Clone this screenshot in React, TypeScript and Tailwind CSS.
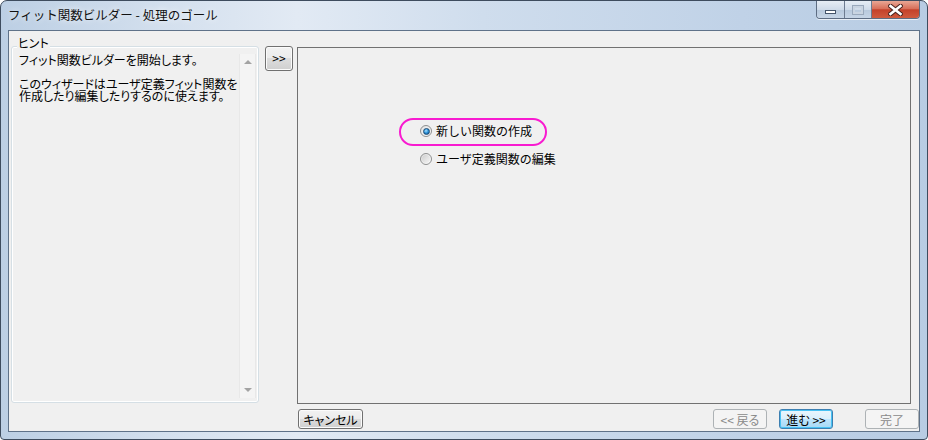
import React from 'react';

type BtnKind = 'normal' | 'disabled' | 'default';

const btnStyles: Record<BtnKind, string> = {
  normal:
    'border-[#707070] text-black bg-[linear-gradient(#f2f2f2_0%,#ebebeb_50%,#dddddd_50%,#cfcfcf_100%)] shadow-[inset_0_0_0_1px_#fbfbfb]',
  disabled: 'border-[#adb2b5] text-[#8a8a8a] bg-[#f4f4f4]',
  default:
    'border-[#3c7fb1] text-black bg-[linear-gradient(#eaf6fd_0%,#d9f0fc_50%,#bee6fd_50%,#a7d9f5_100%)] shadow-[inset_0_0_0_1px_#48c2f3]',
};

const Btn = ({ children, kind = 'normal', w }: { children: React.ReactNode; kind?: BtnKind; w: string }) => (
  <div
    className={`${w} h-[20px] shrink-0 border rounded-[3px] flex items-center justify-center text-[12px] leading-[13px] [font-feature-settings:'palt'] ${btnStyles[kind]}`}
  >
    {children}
  </div>
);

const Radio = ({ checked }: { checked?: boolean }) => (
  <span className="w-[12px] h-[12px] shrink-0 rounded-full border border-[#8e8f8f] bg-[linear-gradient(135deg,#e2e2e2,#fdfdfd)] flex items-center justify-center">
    {checked ? (
      <span className="w-[7px] h-[7px] rounded-full border border-[#1a4a74] bg-[radial-gradient(circle_at_40%_35%,#a8e2ff_0%,#2a90d8_50%,#0f4a80_100%)]" />
    ) : (
      <span className="w-[8px] h-[8px] rounded-full bg-[linear-gradient(135deg,#cfcfcf,#f5f5f5)]" />
    )}
  </span>
);

const CaptionButtons = () => (
  <div className="ml-auto mr-[7px] flex h-[18px] rounded-b-[4px] border border-t-0 border-[#5d6c82] overflow-hidden shadow-[0_1px_0_#e8eef6]">
    <div className="w-[28px] h-full border-r border-[#6d7b90] bg-[linear-gradient(#e6edf5_0%,#cfdbe9_50%,#b7c8dc_51%,#c6d5e6_100%)] flex items-end justify-center pb-[4px]">
      <span className="w-[11px] h-[4px] bg-white border border-[#44546a]" />
    </div>
    <div className="w-[27px] h-full border-r border-[#6d7b90] bg-[linear-gradient(#e6edf5_0%,#cfdbe9_50%,#b7c8dc_51%,#c6d5e6_100%)] flex items-center justify-center">
      <span className="w-[10px] h-[8px] border-2 border-[#c9d4e1] shadow-[0_0_0_1px_#9aa9bc]" />
    </div>
    <div className="w-[47px] h-full bg-[linear-gradient(#e9a795_0%,#d8705a_45%,#c4412a_52%,#cf5a3e_100%)] flex items-center justify-center">
      <svg width="15" height="12" viewBox="0 0 15 12">
        <path d="M2.5 2 L12.5 10 M12.5 2 L2.5 10" stroke="#4a2420" strokeWidth="4.6" strokeLinecap="square" />
        <path d="M2.5 2 L12.5 10 M12.5 2 L2.5 10" stroke="#ffffff" strokeWidth="2.6" strokeLinecap="square" />
      </svg>
    </div>
  </div>
);

const HINT = 'フィット関数ビルダーを開始します。\n\nこのウィザードはユーザ定義フィット関数を\n作成したり編集したりするのに使えます。';

export default function App() {
  return (
    <div className="w-[928px] h-[440px] overflow-hidden bg-white font-['Noto_Sans_CJK_JP','Noto_Sans',sans-serif]">
      <div className="w-[928px] h-[440px] flex flex-col rounded-t-[7px] rounded-b-[4px] border border-[#3e4c5e] bg-[linear-gradient(90deg,#bccfe4_0%,#d4e0ee_18%,#e2eaf4_32%,#cfdded_52%,#c0d2e7_80%,#b8cce3_100%)]">
        {/* title bar */}
        <div className="h-[29px] flex items-start shrink-0">
          <div className="pl-[7px] pt-[7px] text-[12.5px] leading-[14px] text-[#111] [text-shadow:0_0_6px_#ffffff]">
            フィット関数ビルダー - 処理のゴール
          </div>
          <CaptionButtons />
        </div>

        {/* client */}
        <div className="flex-1 mx-[7px] mb-[7px] border border-[#5f7289] bg-[#f0f0f0] flex text-black">
          {/* hint group */}
          <div className="ml-[2px] mt-[15px] w-[248px] h-[357px] relative border border-[#d5dfe5] rounded-[3px] shadow-[inset_0_0_0_1px_#ffffff] flex pt-[7px] pb-[4px] px-[1px]">
            <div className="absolute left-[5px] top-[-10px] px-[1px] bg-[#f0f0f0] text-[12px] leading-[12px] [font-feature-settings:'palt']">
              ヒント
            </div>
            <div className="flex-1 pl-[6px] whitespace-pre-line text-[12px] leading-[12px] [font-feature-settings:'palt']">
              {HINT}
            </div>
            <div className="w-[17px] mr-[1px] bg-[#f4f4f4] border-x border-[#e8e8e8] flex flex-col justify-between items-center py-[6px]">
              <span className="w-0 h-0 border-x-[4px] border-x-transparent border-b-[4px] border-b-[#a3a3a3]" />
              <span className="w-0 h-0 border-x-[4px] border-x-transparent border-t-[4px] border-t-[#a3a3a3]" />
            </div>
          </div>

          {/* collapse button */}
          <div className="ml-[6px] mt-[15px] w-[28px] h-[25px] shrink-0 border border-[#707070] rounded-[3px] bg-[linear-gradient(#f2f2f2_0%,#ebebeb_50%,#dddddd_50%,#cfcfcf_100%)] shadow-[inset_0_0_0_1px_#fbfbfb] flex items-center justify-center text-[12px] leading-[13px] pb-[3px]">
            &gt;&gt;
          </div>

          {/* right column */}
          <div className="ml-[4px] flex-1 flex flex-col">
            <div className="mt-[16px] w-[614px] h-[357px] border border-[#717171] relative pl-[122px] pt-[76px] flex flex-col gap-[14px]">
              <div className="absolute left-[101px] top-[70px] w-[148px] h-[28px] rounded-full border-2 border-[#f81bd0]" />
              <div className="flex items-center gap-[4px] h-[14px]">
                <Radio checked />
                <span className="text-[12px] leading-[14px]">新しい関数の作成</span>
              </div>
              <div className="flex items-center gap-[4px] h-[14px]">
                <Radio />
                <span className="text-[12px] leading-[14px]">ユーザ定義関数の編集</span>
              </div>
            </div>

            <div className="mt-[5px] flex items-center">
              <div className="ml-[1px]">
                <Btn w="w-[65px]">キャンセル</Btn>
              </div>
              <div className="ml-auto flex">
                <Btn w="w-[54px]" kind="disabled">&lt;&lt; 戻る</Btn>
                <div className="ml-[12px]">
                  <Btn w="w-[54px]" kind="default">進む &gt;&gt;</Btn>
                </div>
                <div className="ml-[32px]">
                  <Btn w="w-[54px]" kind="disabled">完了</Btn>
                </div>
              </div>
            </div>
          </div>
        </div>
      </div>
    </div>
  );
}
